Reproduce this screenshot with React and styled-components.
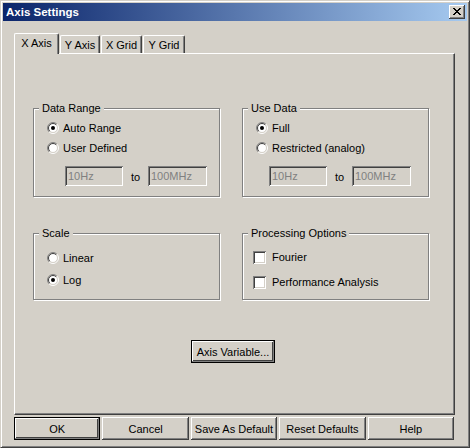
import React from "react";
import styled, { createGlobalStyle, css } from "styled-components";

const Global = createGlobalStyle`
  html, body { margin: 0; padding: 0; background: #d4d0c8; }
  * { box-sizing: border-box; }
`;

const FONT = `"Liberation Sans", Arial, sans-serif`;

const Window = styled.div`
  width: 470px;
  height: 448px;
  background: #d4d0c8;
  border: 1px solid;
  border-color: #d4d0c8 #404040 #404040 #d4d0c8;
  box-shadow: inset 1px 1px 0 #fff, inset -1px -1px 0 #808080;
  padding: 2px;
  display: flex;
  flex-direction: column;
  font-family: ${FONT};
  font-size: 11px;
  line-height: 13px;
  color: #000;
`;

const TitleBar = styled.div`
  height: 18px;
  flex: none;
  display: flex;
  align-items: center;
  justify-content: space-between;
  padding: 0 2px 0 3px;
  background: linear-gradient(to right, #0a246a, #a6caf0);
`;

const Title = styled.span`
  color: #fff;
  font-weight: bold;
  font-size: 11.5px;
`;

const CloseButton = styled.div`
  width: 16px;
  height: 14px;
  background: #d4d0c8;
  box-shadow: inset -1px -1px 0 #404040, inset 1px 1px 0 #fff,
    inset -2px -2px 0 #808080;
  display: flex;
  align-items: center;
  justify-content: center;
  padding: 0 1px 1px 0;
`;

const Body = styled.div`
  flex: 1;
  display: flex;
  flex-direction: column;
  padding: 12px 12px 5px 11px;
`;

const TabStrip = styled.div`
  height: 20px;
  flex: none;
  display: flex;
  align-items: flex-start;
  gap: 1px;
`;

const Tab = styled.div`
  position: relative;
  width: ${(p) => p.$w}px;
  height: ${(p) => (p.$active ? 21 : 18)}px;
  margin-top: ${(p) => (p.$active ? 0 : 2)}px;
  z-index: ${(p) => (p.$active ? 2 : 0)};
  background: #d4d0c8;
  border-top: 1px solid #fff;
  border-left: 1px solid #fff;
  border-right: 1px solid #404040;
  border-radius: 2px 2px 0 0;
  box-shadow: inset -1px 0 0 #808080;
  display: flex;
  justify-content: center;
  padding-top: 3px;
  white-space: nowrap;
`;

const TabPanel = styled.div`
  flex: 1;
  display: flex;
  flex-direction: column;
  align-items: flex-start;
  border-top: 1px solid #fff;
  border-left: 1px solid #fff;
  border-right: 1px solid #404040;
  border-bottom: 1px solid #404040;
  box-shadow: inset -1px -1px 0 #808080;
  padding: 54px 0 0 18px;
`;

const GroupGrid = styled.div`
  display: grid;
  grid-template-columns: 187px 187px;
  grid-template-rows: 89px 67px;
  column-gap: 22px;
  row-gap: 36px;
`;

const GroupBox = styled.div`
  position: relative;
  border: 1px solid #808080;
  box-shadow: inset 1px 1px 0 #fff, 1px 1px 0 #fff;
  display: flex;
  flex-direction: column;
  padding: ${(p) => p.$pt}px 0 0 ${(p) => p.$pl}px;
  gap: ${(p) => p.$gap || 0}px;
`;

const Legend = styled.span`
  position: absolute;
  top: -7px;
  left: 5px;
  padding: 0 3px;
  background: #d4d0c8;
  white-space: nowrap;
`;

const OptionRow = styled.label`
  height: 20px;
  display: flex;
  align-items: center;
  gap: ${(p) => p.$gap}px;
  white-space: nowrap;
`;

const CheckBox = styled.span`
  width: 13px;
  height: 13px;
  flex: none;
  background: #fff;
  box-shadow: inset 1px 1px 0 #808080, inset -1px -1px 0 #fff,
    inset 2px 2px 0 #404040, inset -2px -2px 0 #d4d0c8;
`;

const RangeRow = styled.div`
  display: flex;
  align-items: center;
  margin-top: 8px;
  padding-left: ${(p) => p.$indent}px;
`;

const Field = styled.input`
  width: ${(p) => p.$w}px;
  height: 20px;
  border: none;
  outline: none;
  margin: 0;
  padding: 0 3px;
  background: #d4d0c8;
  color: #808080;
  font-family: ${FONT};
  font-size: 11px;
  box-shadow: inset 1px 1px 0 #808080, inset -1px -1px 0 #fff,
    inset 2px 2px 0 #404040, inset -2px -2px 0 #d4d0c8;
`;

const ToLabel = styled.span`
  width: 25px;
  text-align: center;
  padding-top: 3px;
`;

const buttonBevel = css`
  box-shadow: inset -1px -1px 0 #404040, inset 1px 1px 0 #fff,
    inset -2px -2px 0 #808080;
`;
const defaultBevel = css`
  box-shadow: inset 0 0 0 1px #000, inset -2px -2px 0 #808080,
    inset 2px 2px 0 #fff, inset -3px -3px 0 #404040;
`;

const Button = styled.button`
  height: 23px;
  margin: 0;
  padding: 0;
  border: none;
  background: #d4d0c8;
  font-family: ${FONT};
  font-size: 11px;
  color: #000;
  display: flex;
  align-items: center;
  justify-content: center;
  white-space: nowrap;
  ${(p) => (p.$default ? defaultBevel : buttonBevel)}
`;

const AxisButton = styled(Button)`
  width: 84px;
  margin: 40px 0 0 158px;
`;

const ButtonRow = styled.div`
  margin-top: 2px;
  width: 440px;
  display: grid;
  grid-template-columns: repeat(5, 1fr);
  gap: 2px;
`;

function Radio({ checked }) {
  return (
    <svg width="12" height="12" viewBox="0 0 12 12" style={{ flex: "none" }}>
      <circle cx="6" cy="6" r="4.5" fill="#fff" />
      <path d="M2.111 9.889A5.5 5.5 0 0 1 9.889 2.111" fill="none" stroke="#808080" />
      <path d="M9.889 2.111A5.5 5.5 0 0 1 2.111 9.889" fill="none" stroke="#fff" />
      <path d="M2.818 9.182A4.5 4.5 0 0 1 9.182 2.818" fill="none" stroke="#404040" />
      <path d="M9.182 2.818A4.5 4.5 0 0 1 2.818 9.182" fill="none" stroke="#d4d0c8" />
      {checked && <circle cx="6" cy="6" r="2" fill="#000" />}
    </svg>
  );
}

function CloseGlyph() {
  return (
    <svg width="8" height="7" viewBox="0 0 8 7">
      <path
        fill="#000"
        d="M0 0h2v1H0zM6 0h2v1H6zM1 1h2v1H1zM5 1h2v1H5zM2 2h4v1H2zM3 3h2v1H3zM2 4h4v1H2zM1 5h2v1H1zM5 5h2v1H5zM0 6h2v1H0zM6 6h2v1H6z"
      />
    </svg>
  );
}

const tabs = [
  { label: "X Axis", w: 45, active: true },
  { label: "Y Axis", w: 40 },
  { label: "X Grid", w: 41 },
  { label: "Y Grid", w: 42 },
];

const footerButtons = [
  { label: "OK", def: true },
  { label: "Cancel" },
  { label: "Save As Default" },
  { label: "Reset Defaults" },
  { label: "Help" },
];

function RangeGroup({ title, options, indent }) {
  return (
    <GroupBox $pt={9} $pl={13}>
      <Legend>{title}</Legend>
      {options.map((o) => (
        <OptionRow key={o.label} $gap={4}>
          <Radio checked={o.checked} />
          <span>{o.label}</span>
        </OptionRow>
      ))}
      <RangeRow $indent={indent}>
        <Field $w={58} disabled value="10Hz" readOnly />
        <ToLabel>to</ToLabel>
        <Field $w={59} disabled value="100MHz" readOnly />
      </RangeRow>
    </GroupBox>
  );
}

export default function App() {
  return (
    <>
      <Global />
      <Window>
        <TitleBar>
          <Title>Axis Settings</Title>
          <CloseButton>
            <CloseGlyph />
          </CloseButton>
        </TitleBar>
        <Body>
          <TabStrip>
            {tabs.map((t) => (
              <Tab key={t.label} $w={t.w} $active={t.active}>
                {t.label}
              </Tab>
            ))}
          </TabStrip>
          <TabPanel>
            <GroupGrid>
              <RangeGroup
                title="Data Range"
                indent={18}
                options={[
                  { label: "Auto Range", checked: true },
                  { label: "User Defined" },
                ]}
              />
              <RangeGroup
                title="Use Data"
                indent={13}
                options={[
                  { label: "Full", checked: true },
                  { label: "Restricted (analog)" },
                ]}
              />
              <GroupBox $pt={14} $pl={13} $gap={2}>
                <Legend>Scale</Legend>
                <OptionRow $gap={4}>
                  <Radio />
                  <span>Linear</span>
                </OptionRow>
                <OptionRow $gap={4}>
                  <Radio checked />
                  <span>Log</span>
                </OptionRow>
              </GroupBox>
              <GroupBox $pt={13} $pl={10} $gap={5}>
                <Legend>Processing Options</Legend>
                <OptionRow $gap={6}>
                  <CheckBox />
                  <span>Fourier</span>
                </OptionRow>
                <OptionRow $gap={6}>
                  <CheckBox />
                  <span>Performance Analysis</span>
                </OptionRow>
              </GroupBox>
            </GroupGrid>
            <AxisButton $default>Axis Variable...</AxisButton>
          </TabPanel>
          <ButtonRow>
            {footerButtons.map((b) => (
              <Button key={b.label} $default={b.def}>
                {b.label}
              </Button>
            ))}
          </ButtonRow>
        </Body>
      </Window>
    </>
  );
}
